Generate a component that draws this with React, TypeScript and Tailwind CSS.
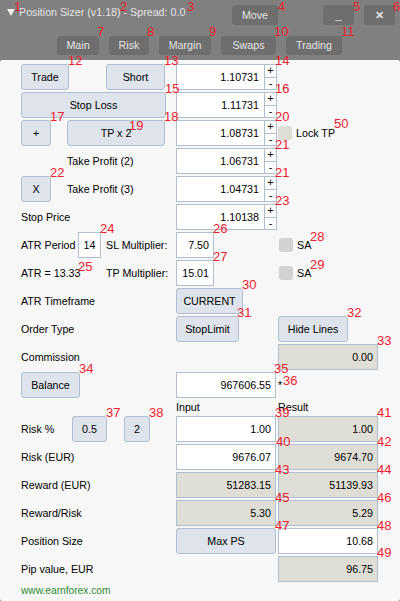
const F = "font-['Liberation_Sans',Arial,sans-serif]";

function Btn({ w, children, className = "" }: { w: string; children: React.ReactNode; className?: string }) {
  return (
    <div className={`${w} h-[26px] shrink-0 flex items-center justify-center rounded-[3px] border border-[#b0bfcf] bg-[#dee3ec] text-[#000] ${className}`}>
      {children}
    </div>
  );
}

function Field({ w = "w-[100px]", gray = false, center = false, children }: { w?: string; gray?: boolean; center?: boolean; children: React.ReactNode }) {
  return (
    <div className={`${w} h-[26px] shrink-0 flex items-center border border-[#b0bfcf] ${center ? "justify-center" : "justify-end pr-[4px]"} ${gray ? "bg-[#deded6]" : "bg-white"}`}>
      {children}
    </div>
  );
}

function Spin({ children }: { children: React.ReactNode }) {
  return (
    <div className="w-[101px] h-[26px] shrink-0 flex border border-[#b0bfcf]">
      <div className="flex-1 flex items-center justify-end pr-[5px] bg-white">{children}</div>
      <div className="w-[12px] flex flex-col border-l border-[#b0bfcf] bg-white text-[11px] leading-none">
        <div className="flex-1 flex items-center justify-center border-b border-[#b0bfcf]">+</div>
        <div className="flex-1 flex items-center justify-center">-</div>
      </div>
    </div>
  );
}

function Row({ children, className = "" }: { children: React.ReactNode; className?: string }) {
  return <div className={`flex items-center h-[26px] ${className}`}>{children}</div>;
}

function Left({ children }: { children?: React.ReactNode }) {
  return <div className="w-[155px] shrink-0 flex items-center">{children}</div>;
}

function Check({ label, color = "bg-[#d2d2d2]" }: { label: string; color?: string }) {
  return (
    <div className="flex items-center">
      <div className={`w-[14px] h-[14px] rounded-[3px] ${color}`} />
      <span className="ml-[4px]">{label}</span>
    </div>
  );
}

function Head({ w, h = "h-[20px]", children }: { w: string; h?: string; children: React.ReactNode }) {
  return (
    <div className={`${w} ${h} shrink-0 flex items-center justify-center rounded-[3px] bg-[#6e6e6e] text-[#e4e4e4]`}>
      {children}
    </div>
  );
}

const marks: [string, number, number][] = [
  ["1", 14, 0], ["2", 120, 0], ["3", 187, 0], ["4", 278, 0], ["5", 353, 0], ["6", 393, 0],
  ["7", 97, 25], ["8", 147, 25], ["9", 209, 25], ["10", 274, 25], ["11", 341, 25],
  ["12", 68, 54], ["13", 164, 54], ["14", 275, 54], ["15", 165, 82], ["16", 275, 82],
  ["17", 50, 110], ["18", 164, 110], ["19", 129, 119], ["20", 275, 110], ["50", 334, 117],
  ["21", 275, 138], ["22", 50, 166], ["21", 275, 166], ["23", 275, 194], ["24", 100, 222],
  ["26", 213, 222], ["28", 310, 230], ["25", 78, 260], ["27", 213, 250], ["29", 310, 258],
  ["30", 242, 278], ["31", 237, 306], ["32", 347, 306], ["33", 377, 334], ["34", 79, 362],
  ["35", 274, 362], ["36", 283, 374], ["37", 106, 406], ["38", 149, 406], ["39", 275, 406],
  ["41", 377, 406], ["40", 276, 435], ["42", 377, 435], ["43", 275, 463], ["44", 377, 463],
  ["45", 275, 491], ["46", 377, 491], ["47", 275, 519], ["48", 377, 519], ["49", 377, 546],
];

export default function App() {
  return (
    <div className={`${F} relative w-[400px] h-[601px] overflow-hidden bg-[#808080] text-[10.7px] leading-none text-black`}>
      <div className="h-[60px] text-[#e4e4e4]">
        <div className="flex items-start h-[30px] pr-[5px]">
          <span className="ml-[7px] mt-[9px] w-0 h-0 border-x-[4px] border-x-transparent border-t-[7px] border-t-[#f0f0f0]" />
          <span className="ml-[4px] mt-[7px] whitespace-nowrap">Position Sizer (v1.18) - Spread: 0.0</span>
          <div className="ml-auto mt-[5px] flex">
            <Head w="w-[46px]">Move</Head>
            <Head w="w-[31px] ml-[45px]">_</Head>
            <Head w="w-[31px] ml-[10px]"><span className="text-[11px] font-bold">✕</span></Head>
          </div>
        </div>
        <div className="flex mt-[6px] ml-[57px] gap-[10px]">
          <Head w="w-[42px]" h="h-[19px]">Main</Head>
          <Head w="w-[40px]" h="h-[19px]">Risk</Head>
          <Head w="w-[52px]" h="h-[19px]">Margin</Head>
          <Head w="w-[55px]" h="h-[19px]">Swaps</Head>
          <Head w="w-[56px]" h="h-[19px]">Trading</Head>
        </div>
      </div>

      <div className="h-[541px] bg-[#f7f7f7] rounded-[2px] pl-[21px] pt-[4px] flex flex-col gap-[2px]">
        <Row>
          <Left><Btn w="w-[48px]">Trade</Btn><Btn w="w-[59px] ml-[37px]">Short</Btn></Left>
          <Spin>1.10731</Spin>
        </Row>
        <Row>
          <Left><Btn w="w-[145px]">Stop Loss</Btn></Left>
          <Spin>1.11731</Spin>
        </Row>
        <Row>
          <Left><Btn w="w-[30px]">+</Btn><Btn w="w-[98px] ml-[16px]">TP x 2</Btn></Left>
          <Spin>1.08731</Spin>
          <div className="ml-[1px]"><Check label="Lock TP" color="bg-[#deded6]" /></div>
        </Row>
        <Row>
          <Left><span className="ml-[46px]">Take Profit (2)</span></Left>
          <Spin>1.06731</Spin>
        </Row>
        <Row>
          <Left><Btn w="w-[30px]">X</Btn><span className="ml-[16px]">Take Profit (3)</span></Left>
          <Spin>1.04731</Spin>
        </Row>
        <Row>
          <Left>Stop Price</Left>
          <Spin>1.10138</Spin>
        </Row>
        <Row>
          <Left>
            <span className="w-[57px] whitespace-nowrap">ATR Period</span>
            <Field w="w-[23px]" center>14</Field>
            <span className="ml-[5px] whitespace-nowrap">SL Multiplier:</span>
          </Left>
          <Field w="w-[38px]">7.50</Field>
          <div className="w-[65px]" />
          <Check label="SA" />
        </Row>
        <Row>
          <Left>
            <span className="w-[85px] whitespace-nowrap">ATR = 13.33</span>
            <span className="whitespace-nowrap">TP Multiplier:</span>
          </Left>
          <Field w="w-[38px]">15.01</Field>
          <div className="w-[65px]" />
          <Check label="SA" />
        </Row>
        <Row>
          <Left>ATR Timeframe</Left>
          <Btn w="w-[67px]">CURRENT</Btn>
        </Row>
        <Row>
          <Left>Order Type</Left>
          <Btn w="w-[63px]">StopLimit</Btn>
          <Btn w="w-[70px] ml-[39px]">Hide Lines</Btn>
        </Row>
        <Row>
          <Left>Commission</Left>
          <div className="w-[102px]" />
          <Field gray>0.00</Field>
        </Row>
        <Row>
          <Left><Btn w="w-[59px]">Balance</Btn></Left>
          <Field>967606.55</Field>
          <span className="ml-[2px]">*</span>
        </Row>
        <div className="flex items-center h-[14px]">
          <Left />
          <span className="w-[102px]">Input</span>
          <span>Result</span>
        </div>
        <Row>
          <Left>
            <span className="w-[51px]">Risk %</span>
            <Btn w="w-[35px]">0.5</Btn>
            <Btn w="w-[26px] ml-[17px]">2</Btn>
          </Left>
          <Field>1.00</Field>
          <div className="w-[2px]" />
          <Field gray>1.00</Field>
        </Row>
        <Row>
          <Left>Risk (EUR)</Left>
          <Field>9676.07</Field>
          <div className="w-[2px]" />
          <Field gray>9674.70</Field>
        </Row>
        <Row>
          <Left>Reward (EUR)</Left>
          <Field gray>51283.15</Field>
          <div className="w-[2px]" />
          <Field gray>51139.93</Field>
        </Row>
        <Row>
          <Left>Reward/Risk</Left>
          <Field gray>5.30</Field>
          <div className="w-[2px]" />
          <Field gray>5.29</Field>
        </Row>
        <Row>
          <Left>Position Size</Left>
          <Btn w="w-[100px]">Max PS</Btn>
          <div className="w-[2px]" />
          <Field>10.68</Field>
        </Row>
        <Row>
          <Left>Pip value, EUR</Left>
          <div className="w-[102px]" />
          <Field gray>96.75</Field>
        </Row>
        <div className="flex items-center h-[14px] text-[10.2px] text-[#2e8b2e]">www.earnforex.com</div>
      </div>

      {marks.map(([t, x, y], i) => (
        <span key={i} className="absolute text-[13px] leading-none text-[#f0202c]" style={{ left: x, top: y }}>{t}</span>
      ))}
    </div>
  );
}
